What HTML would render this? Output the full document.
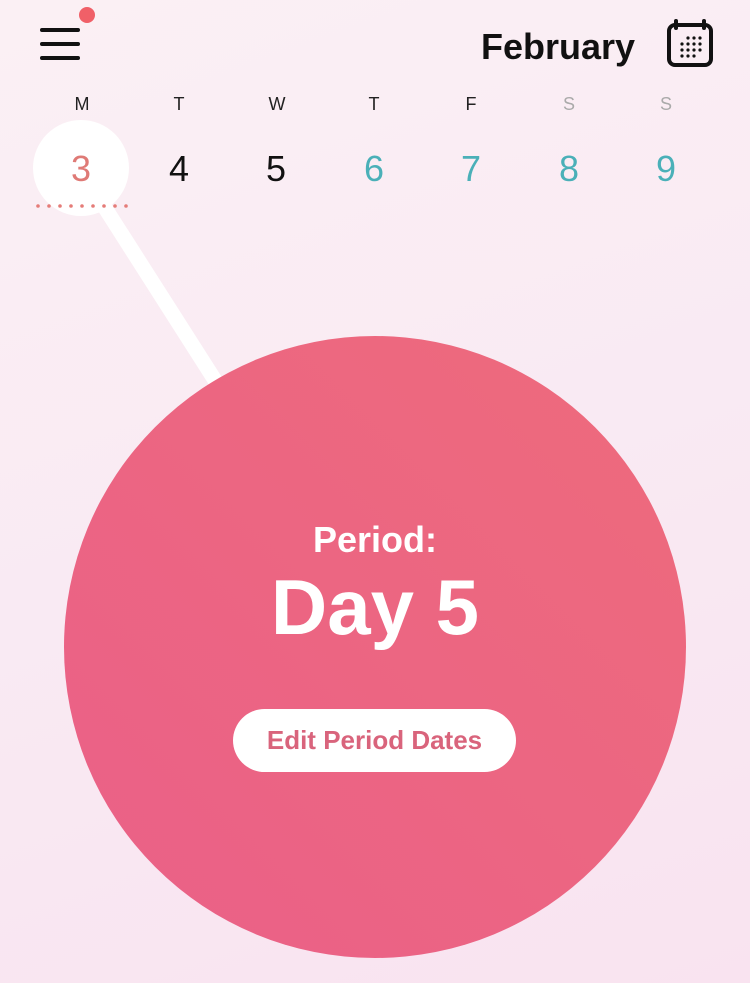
<!DOCTYPE html>
<html><head><meta charset="utf-8"><style>
*{margin:0;padding:0;box-sizing:border-box}
body{width:750px;height:983px;overflow:hidden;position:relative;font-family:"Liberation Sans",sans-serif;background:linear-gradient(160deg,#fbf0f4 0%,#f9eaf3 50%,#f9e3f0 100%)}
.abs{position:absolute}
.dow{position:absolute;top:94px;width:40px;text-align:center;font-size:18px;color:#222}
.num{position:absolute;top:148px;width:60px;text-align:center;font-size:36px;color:#111}
</style></head><body>
<div class="abs" style="left:40px;top:28px;width:40px;height:4px;background:#111;border-radius:2px"></div>
<div class="abs" style="left:40px;top:42px;width:40px;height:4px;background:#111;border-radius:2px"></div>
<div class="abs" style="left:40px;top:56px;width:40px;height:4px;background:#111;border-radius:2px"></div>
<div class="abs" style="left:79px;top:7px;width:16px;height:16px;background:#f06068;border-radius:50%"></div>
<div class="abs" style="left:481px;top:26px;font-size:36px;font-weight:bold;color:#111">February</div>
<svg class="abs" style="left:666px;top:19px" width="48" height="48" viewBox="0 0 48 48">
<rect x="3" y="6" width="42" height="40" rx="6" fill="none" stroke="#111" stroke-width="4"/>
<line x1="10" y1="2" x2="10" y2="9" stroke="#111" stroke-width="4" stroke-linecap="round"/>
<line x1="38" y1="2" x2="38" y2="9" stroke="#111" stroke-width="4" stroke-linecap="round"/>
<g fill="#111"><circle cx="22" cy="19" r="1.6"/><circle cx="28" cy="19" r="1.6"/><circle cx="34" cy="19" r="1.6"/>
<circle cx="16" cy="25" r="1.6"/><circle cx="22" cy="25" r="1.6"/><circle cx="28" cy="25" r="1.6"/><circle cx="34" cy="25" r="1.6"/>
<circle cx="16" cy="31" r="1.6"/><circle cx="22" cy="31" r="1.6"/><circle cx="28" cy="31" r="1.6"/><circle cx="34" cy="31" r="1.6"/>
<circle cx="16" cy="37" r="1.6"/><circle cx="22" cy="37" r="1.6"/><circle cx="28" cy="37" r="1.6"/></g>
</svg>
<svg class="abs" style="left:0;top:0" width="750" height="983">
<line x1="100" y1="200" x2="218" y2="385" stroke="#fff" stroke-width="15"/>
<circle cx="81" cy="168" r="48" fill="#fff"/>
<g fill="#e57c78"><circle cx="38" cy="206" r="1.8"/><circle cx="49" cy="206" r="1.8"/><circle cx="60" cy="206" r="1.8"/><circle cx="71" cy="206" r="1.8"/><circle cx="82" cy="206" r="1.8"/><circle cx="93" cy="206" r="1.8"/><circle cx="104" cy="206" r="1.8"/><circle cx="115" cy="206" r="1.8"/><circle cx="126" cy="206" r="1.8"/></g>
<defs><linearGradient id="g" x1="1" y1="0" x2="0" y2="1"><stop offset="0" stop-color="#ee6b7c"/><stop offset="1" stop-color="#ea6088"/></linearGradient></defs>
<circle cx="375" cy="647" r="311" fill="url(#g)"/>
</svg>
<div class="dow" style="left:62px">M</div>
<div class="dow" style="left:159px">T</div>
<div class="dow" style="left:257px">W</div>
<div class="dow" style="left:354px">T</div>
<div class="dow" style="left:451px">F</div>
<div class="dow" style="left:549px;color:#aaa">S</div>
<div class="dow" style="left:646px;color:#aaa">S</div>
<div class="num" style="left:51px;color:#df7a76">3</div>
<div class="num" style="left:149px">4</div>
<div class="num" style="left:246px">5</div>
<div class="num" style="left:344px;color:#4ab0b8">6</div>
<div class="num" style="left:441px;color:#4ab0b8">7</div>
<div class="num" style="left:539px;color:#4ab0b8">8</div>
<div class="num" style="left:636px;color:#4ab0b8">9</div>
<div class="abs" style="left:0;width:750px;top:519px;text-align:center;font-size:36px;font-weight:bold;color:#fff">Period:</div>
<div class="abs" style="left:0;width:750px;top:562px;text-align:center;font-size:78px;font-weight:bold;color:#fff">Day 5</div>
<div class="abs" style="left:233px;top:709px;width:283px;height:63px;border-radius:32px;background:#fff;text-align:center;line-height:63px;font-size:26px;font-weight:bold;color:#d9647c">Edit Period Dates</div>
</body></html>
